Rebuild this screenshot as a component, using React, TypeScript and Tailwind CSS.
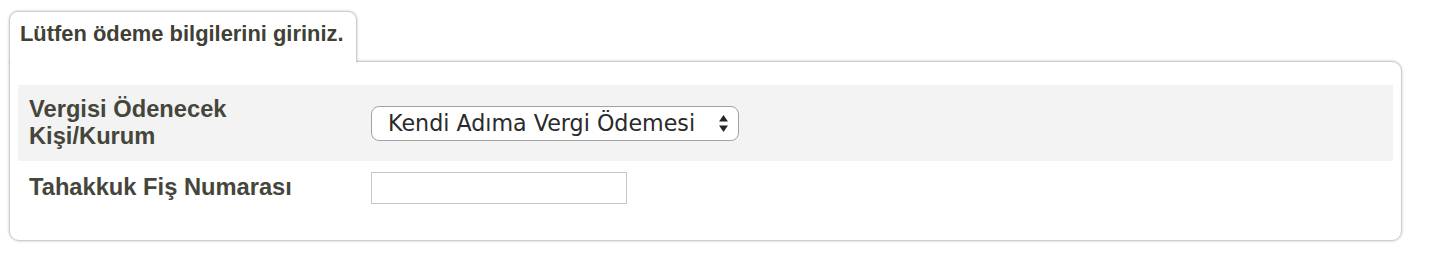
const labelCls =
  "w-[353px] shrink-0 pl-[11px] font-['Liberation_Sans',Arial,sans-serif] text-[23.7px] font-bold leading-[1.15] text-[#45463b]";

const App = () => {
  return (
    <main className="min-h-[270px] bg-white pt-[11px] pl-[9px]">
      {/* Tab */}
      <div className="relative z-10 h-[51px] w-[348px] rounded-t-[9px] border border-b-0 border-[#cdcdcd] bg-white pl-[10px] pt-[9px] shadow-[0_0_3px_rgba(0,0,0,0.22)]">
        <span className="font-['Liberation_Sans',Arial,sans-serif] text-[21.9px] font-bold leading-[1.15] text-[#3f4036]">
          Lütfen ödeme bilgilerini giriniz.
        </span>
        <span className="absolute -bottom-[4px] left-0 right-0 h-[5px] bg-white" />
      </div>

      {/* Panel */}
      <div className="-mt-px w-[1393px] rounded-[10px] rounded-tl-none border border-[#cdcdcd] bg-white px-[8px] pb-[25px] pt-[23px] shadow-[0_0_3px_rgba(0,0,0,0.22)]">
        {/* Vergisi Ödenecek */}
        <div className="flex h-[76px] items-center bg-[#f3f3f3]">
          <div className={labelCls}>
            Vergisi Ödenecek
            <br />
            Kişi/Kurum
          </div>
          <div className="relative h-[35px] w-[368px]">
            <select
              defaultValue="kendi"
              className="h-full w-full appearance-none rounded-[8px] border-[1.5px] border-[#a2a2a2] bg-white py-0 pl-[16px] font-['DejaVu_Sans',Verdana,sans-serif] text-[22.2px] leading-[1.2] text-[#2a2a2a] outline-none"
            >
              <option value="kendi">Kendi Adıma Vergi Ödemesi</option>
              <option value="baska">Başkası Adına Vergi Ödemesi</option>
            </select>
            <svg
              className="pointer-events-none absolute right-[11px] top-[9px]"
              width="9"
              height="17"
              viewBox="0 0 9 17"
            >
              <polygon points="0,6.5 4.5,0 9,6.5" fill="#262626" />
              <polygon points="0,10.5 4.5,17 9,10.5" fill="#262626" />
            </svg>
          </div>
        </div>

        {/* Tahakkuk Fiş Numarası */}
        <div className="flex h-[54px] items-center">
          <div className={labelCls}>Tahakkuk Fiş Numarası</div>
          <input
            type="text"
            className="h-[32px] w-[256px] border border-[#c6c6c6] bg-white px-1 outline-none"
          />
        </div>
      </div>
    </main>
  );
};

export default App;
